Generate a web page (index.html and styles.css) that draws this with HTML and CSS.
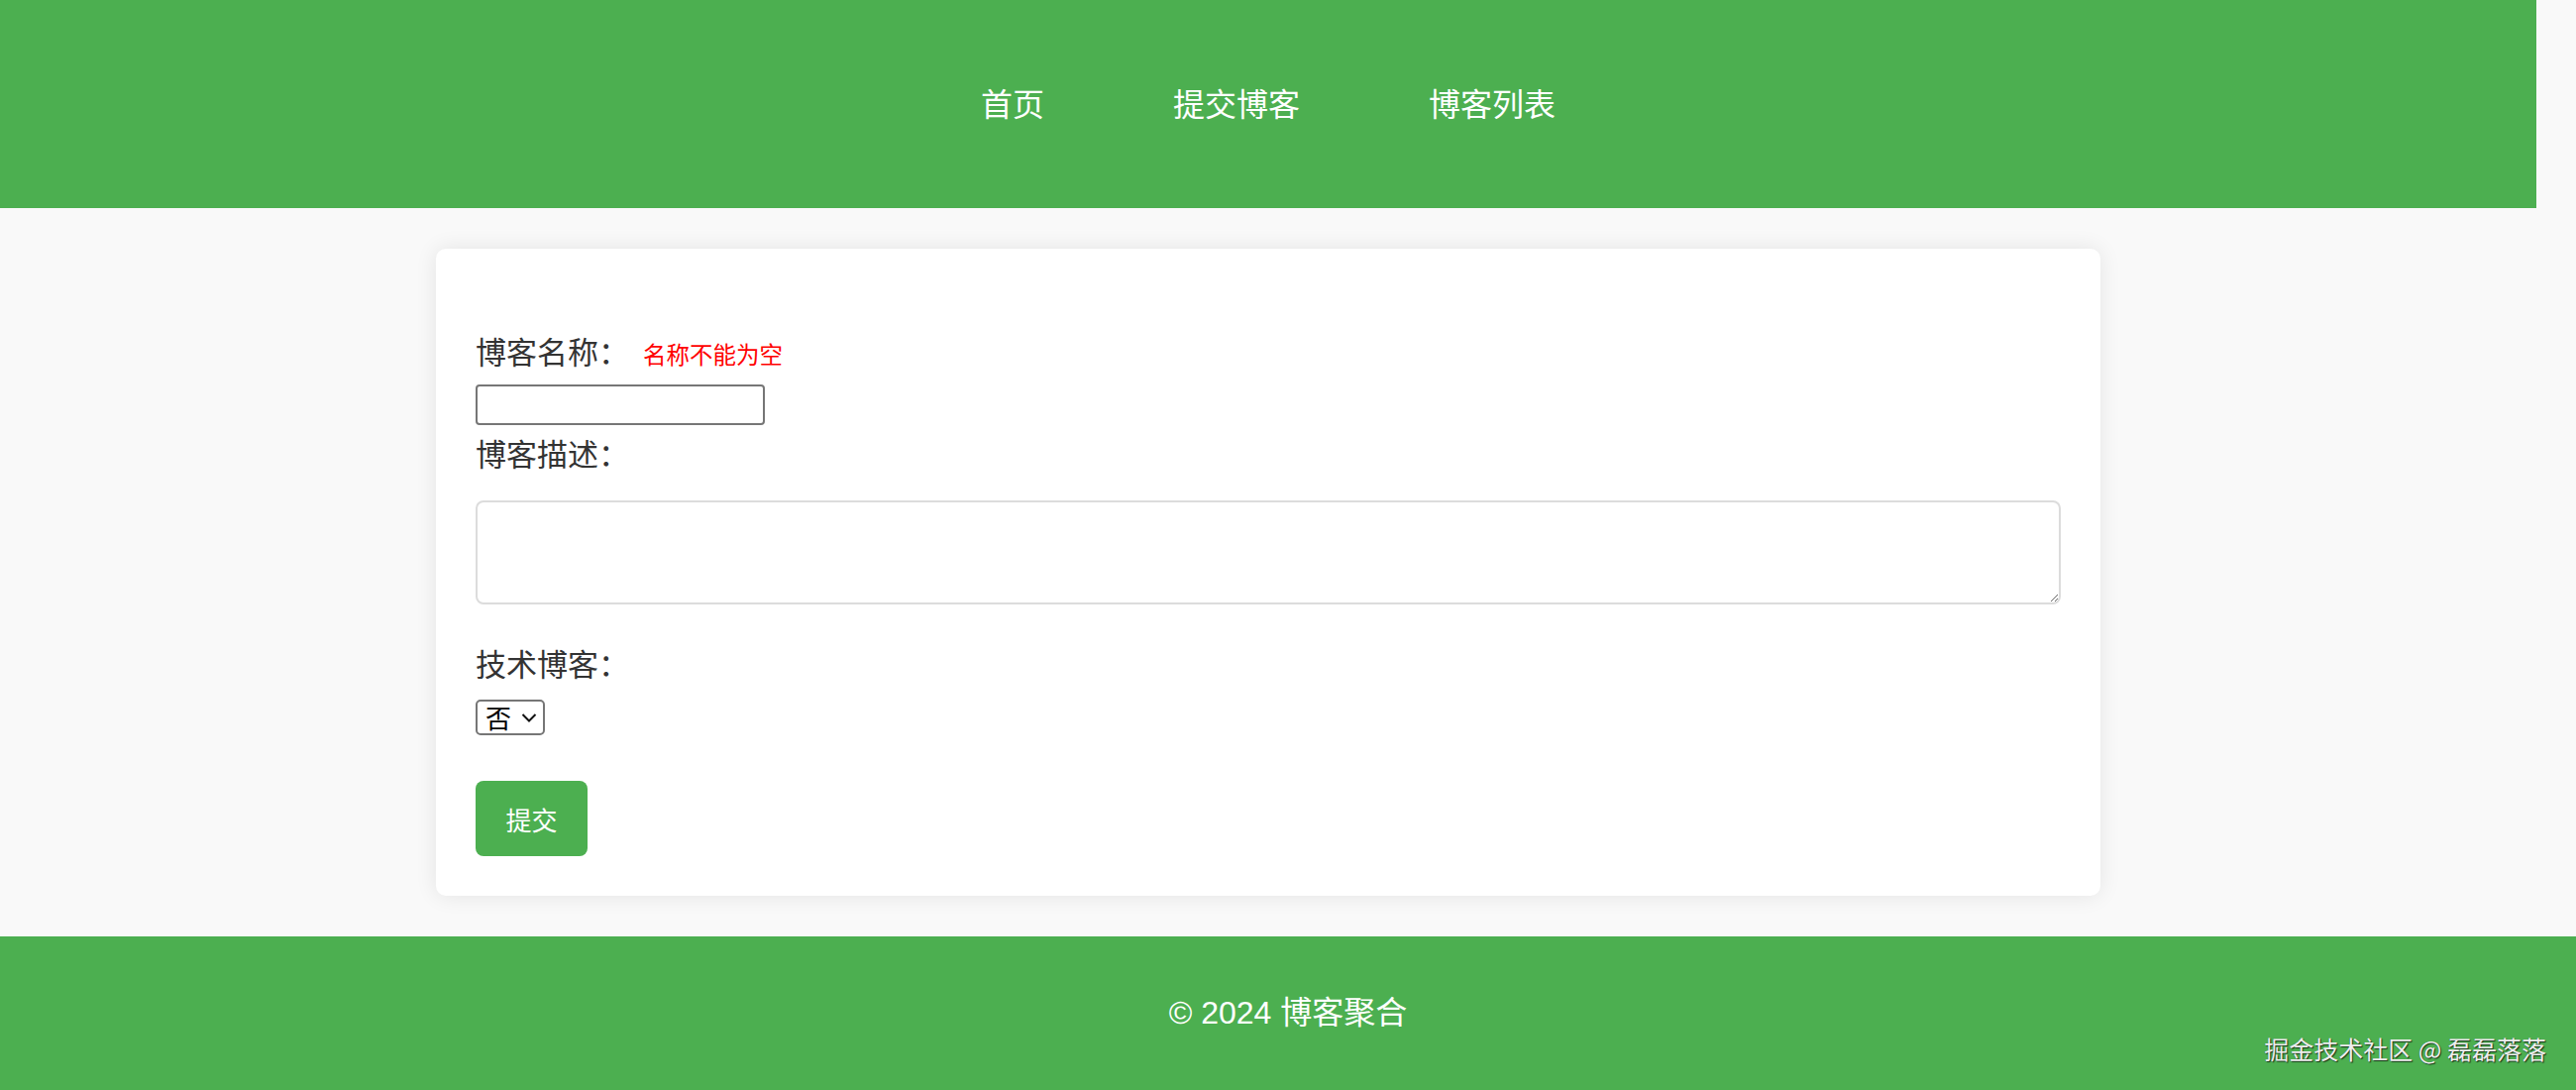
FILE: index.html
```html
<!DOCTYPE html>
<html lang="zh-CN">
<head>
<meta charset="utf-8">
<title>提交博客 - 博客聚合</title>
<link rel="stylesheet" href="styles.css">
</head>
<body>
<div class="page">
  <header class="site-header">
    <nav class="nav">
      <a class="nav-link" href="#">首页</a>
      <a class="nav-link" href="#">提交博客</a>
      <a class="nav-link" href="#">博客列表</a>
    </nav>
  </header>
  <main class="main">
    <section class="card">
      <form class="blog-form">
        <div class="form-group">
          <div class="label-row"><label class="label" for="name">博客名称：</label><span class="error">名称不能为空</span></div>
          <input class="text-input" id="name" type="text">
        </div>
        <div class="form-group">
          <div class="label-row"><label class="label" for="desc">博客描述：</label></div>
          <textarea class="textarea" id="desc"></textarea>
        </div>
        <div class="form-group group-tech">
          <div class="label-row"><label class="label" for="tech">技术博客：</label></div>
          <span class="select-wrap">
            <select class="select" id="tech">
              <option>否</option>
              <option>是</option>
            </select>
            <svg class="select-arrow" width="16" height="11" viewBox="0 0 16 11"><path d="M1.5 2 L8 8.5 L14.5 2" fill="none" stroke="#111" stroke-width="2"/></svg>
          </span>
        </div>
        <button class="submit" type="button">提交</button>
      </form>
    </section>
  </main>
</div>
<footer class="site-footer">
  <p class="copyright">© 2024 博客聚合</p>
  <span class="watermark">掘金技术社区 @ 磊磊落落</span>
</footer>
</body>
</html>
```

FILE: styles.css
```css
* { box-sizing: border-box; }

html, body {
  margin: 0;
  padding: 0;
}

body {
  background: #f9f9f9;
  font-family: "Liberation Sans", "Noto Sans CJK SC", sans-serif;
  color: #333;
  overflow: hidden;
}

.page {
  width: calc(100% - 40px);
}

.site-header {
  background: #4caf50;
  height: 210px;
  display: flex;
  align-items: center;
  justify-content: center;
}

.nav {
  display: flex;
  gap: 130px;
  margin-top: -4px;
}

.nav-link {
  color: #fff;
  text-decoration: none;
  font-family: "Noto Sans CJK SC", sans-serif;
  font-size: 32px;
  line-height: 44px;
}

.main {
  padding: 41px 0;
}

.card {
  width: 1680px;
  margin: 0 auto;
  background: #fff;
  border-radius: 10px;
  box-shadow: 0 0 22px rgba(0, 0, 0, 0.09);
  padding: 81px 40px 40px;
}

.blog-form {
  display: flex;
  flex-direction: column;
  align-items: flex-start;
}

.form-group {
  display: flex;
  flex-direction: column;
  align-items: flex-start;
  width: 100%;
}

.label-row {
  display: flex;
  align-items: baseline;
  line-height: 44px;
  height: 44px;
}

.label {
  font-family: "Noto Sans CJK SC", sans-serif;
  font-size: 31px;
  color: #333;
}

.error {
  font-family: "Noto Sans CJK SC", sans-serif;
  font-size: 23.5px;
  color: #f00;
  margin-left: 14px;
}

.text-input {
  margin-top: 12px;
  width: 292px;
  height: 41px;
  border: 2px solid #767676;
  border-radius: 4px;
  background: #fff;
  font-size: 24px;
  padding: 0 6px;
}

.form-group + .form-group {
  margin-top: 6px;
}

.textarea {
  margin-top: 26px;
  width: 100%;
  height: 105px;
  border: 2px solid #dcdcdc;
  border-radius: 8px;
  background: #fff;
  resize: vertical;
  font-size: 24px;
  padding: 8px 12px;
}

.group-tech {
  margin-top: 37px !important;
}

.select-wrap {
  position: relative;
  display: inline-block;
  margin-top: 15px;
}

.select {
  appearance: none;
  -webkit-appearance: none;
  width: 70px;
  height: 36px;
  border: 2px solid #767676;
  border-radius: 5px;
  background: #fff;
  color: #000;
  font-family: "Noto Sans CJK SC", sans-serif;
  font-size: 26px;
  line-height: 30px;
  padding: 0 0 0 8px;
}

.select-arrow {
  position: absolute;
  left: 46px;
  top: 13px;
  pointer-events: none;
}

.submit {
  margin-top: 46px;
  width: 113px;
  height: 76px;
  border: none;
  border-radius: 8px;
  background: #4caf50;
  color: #fff;
  font-family: "Noto Sans CJK SC", sans-serif;
  font-size: 26px;
  padding: 0;
}

.site-footer {
  position: relative;
  background: #4caf50;
  height: 155px;
  display: flex;
  align-items: center;
  justify-content: center;
}

.copyright {
  margin: 0;
  color: #fff;
  font-size: 32px;
  line-height: 44px;
  margin-top: -2px;
}

.watermark {
  position: absolute;
  right: 30px;
  bottom: 26px;
  font-family: "Noto Sans CJK SC", sans-serif;
  font-size: 25px;
  line-height: 32px;
  color: #eeeeee;
  text-shadow: 1px 1px 1px rgba(0, 0, 0, 0.7), -0.5px -0.5px 0 rgba(0, 0, 0, 0.35);
}
```
